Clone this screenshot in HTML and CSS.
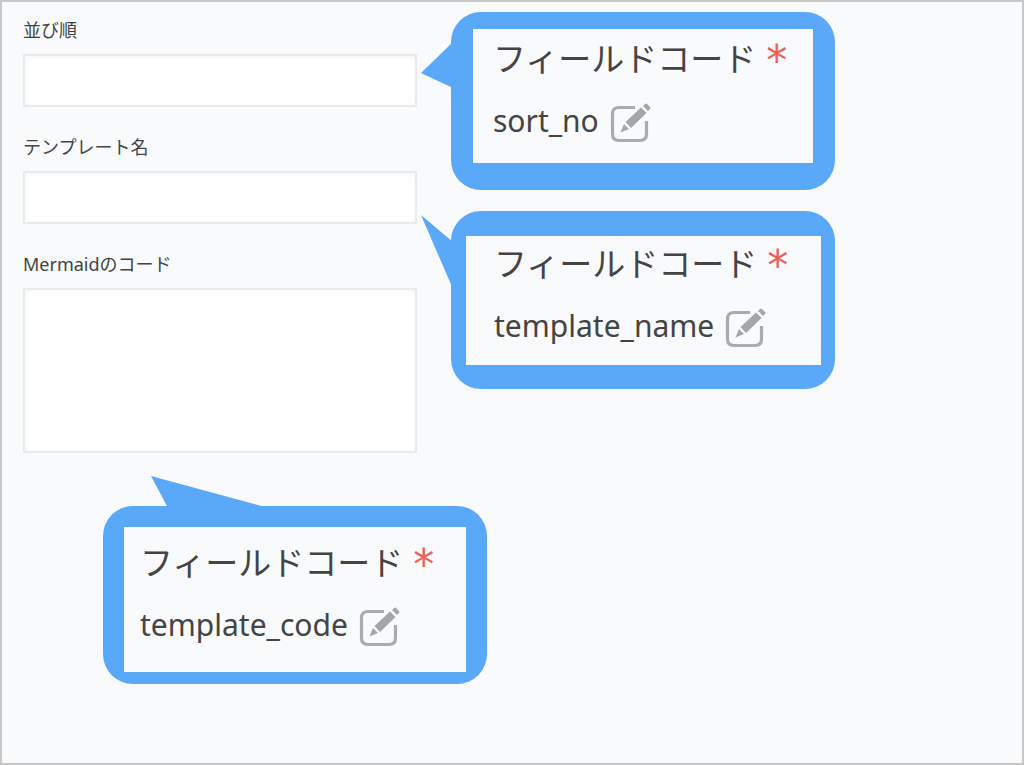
FILE: index.html
```html
<!DOCTYPE html>
<html lang="ja">
<head>
<meta charset="utf-8">
<meta name="viewport" content="width=device-width, initial-scale=1">
<title>フィールドコード</title>
<link rel="stylesheet" href="styles.css">
</head>
<body>
<svg class="defs" aria-hidden="true">
  <symbol id="edit" viewBox="0 0 42 42">
    <path d="M25 4.500H9Q2.500 4.500 2.500 11V31Q2.500 37.500 9 37.500H30Q36.500 37.500 36.500 31V18" fill="none" stroke="#a9abac" stroke-width="3.200"/>
    <path d="M10.500 29.500L14 21L19 26Z M15.500 19L31 4.500L36.500 10L21 25Z M33 3L35 1Q36 0 37 1L40 4Q41 5 40 6L38 8Z" fill="#a4a6a7"/>
  </symbol>
</svg>
<main class="board">
  <form class="form">
    <div class="field">
      <label class="label" for="sort">並び順</label>
      <input class="box" id="sort" type="text">
    </div>
    <div class="field">
      <label class="label" for="name">テンプレート名</label>
      <input class="box" id="name" type="text">
    </div>
    <div class="field">
      <label class="label" for="code">Mermaidのコード</label>
      <textarea class="box area" id="code"></textarea>
    </div>
  </form>

  <section class="callout callout-sort">
    <svg class="tail" viewBox="0 0 32 46" aria-hidden="true"><path d="M0 31L32 0V46Z"/></svg>
    <div class="panel">
      <h2 class="title">フィールドコード<span class="star">*</span></h2>
      <div class="value">sort_no<button class="edit" type="button" aria-label="編集"><svg><use href="#edit"/></svg></button></div>
    </div>
  </section>

  <section class="callout callout-name">
    <svg class="tail" viewBox="0 0 32 74" aria-hidden="true"><path d="M0 0L32 27V74Z"/></svg>
    <div class="panel">
      <h2 class="title">フィールドコード<span class="star">*</span></h2>
      <div class="value">template_name<button class="edit" type="button" aria-label="編集"><svg><use href="#edit"/></svg></button></div>
    </div>
  </section>

  <section class="callout callout-code">
    <svg class="tail" viewBox="0 0 118 32" aria-hidden="true"><path d="M0 0L118 32H17Z"/></svg>
    <div class="panel">
      <h2 class="title">フィールドコード<span class="star">*</span></h2>
      <div class="value">template_code<button class="edit" type="button" aria-label="編集"><svg><use href="#edit"/></svg></button></div>
    </div>
  </section>
</main>
</body>
</html>
```

FILE: styles.css
```css
* { box-sizing: border-box; }

body {
  margin: 0;
  color: #444;
  background: #f8fafc;
  font-family: "Noto Sans", "Noto Sans CJK JP", sans-serif;
}

.defs { position: absolute; width: 0; height: 0; }

.board {
  position: relative;
  min-height: 100vh;
  padding: 14px 21px;
  border: 2px solid #c8c8c8;
  background: #f8fafc;
}

.form {
  display: flex;
  flex-direction: column;
  gap: 26px;
  width: 42%;
  max-width: 394px;
}

.field { display: flex; flex-direction: column; gap: 10px; }

.label { font-size: 18px; line-height: 28px; }

.box {
  display: block;
  width: 100%;
  height: 53px;
  padding: 8px 12px;
  border: 2px solid #e8eaeb;
  border-radius: 0;
  background: #fff;
  box-shadow: inset 1px 1px 4px #f3f4f5;
  font: inherit;
  font-size: 18px;
  resize: none;
}

.area { height: 165px; }

.callout {
  position: absolute;
  display: flex;
  width: 384px;
  height: 178px;
  border-radius: 30px;
  background: #5aa9f8;
}

.callout-sort { left: 449px; top: 10px; padding: 17px 22px 27px; }
.callout-name { left: 449px; top: 209px; padding: 25px 14px 24px 15px; }
.callout-code { left: 101px; top: 504px; padding: 21px 21px 12px; }

.tail { position: absolute; fill: #5aa9f8; }
.callout-sort .tail { left: -30px; top: 30px; width: 32px; height: 46px; }
.callout-name .tail { left: -30px; top: 4px; width: 32px; height: 74px; }
.callout-code .tail { left: 48px; top: -30px; width: 118px; height: 32px; }

.panel {
  flex: 1;
  padding: 2px 20px;
  background: #f8fafc;
}

.callout-name .panel { padding: 0 28px; }
.callout-code .panel { padding: 8px 16px; }

.title {
  display: flex;
  align-items: center;
  gap: 10px;
  height: 52px;
  margin: 0;
  font-family: "Noto Sans CJK JP", sans-serif;
  font-size: 33px;
  font-weight: 400;
  line-height: 52px;
  white-space: nowrap;
}

.star {
  padding-top: 8px;
  color: #ea6158;
  font-family: "DejaVu Sans", sans-serif;
  font-size: 42px;
}

.value {
  display: flex;
  align-items: center;
  gap: 11px;
  height: 48px;
  margin-top: 14px;
  font-size: 30px;
  line-height: 48px;
}

.edit {
  padding: 6px 0 0;
  border: 0;
  background: none;
  line-height: 0;
  cursor: pointer;
}

.edit svg { width: 42px; height: 42px; }
```
